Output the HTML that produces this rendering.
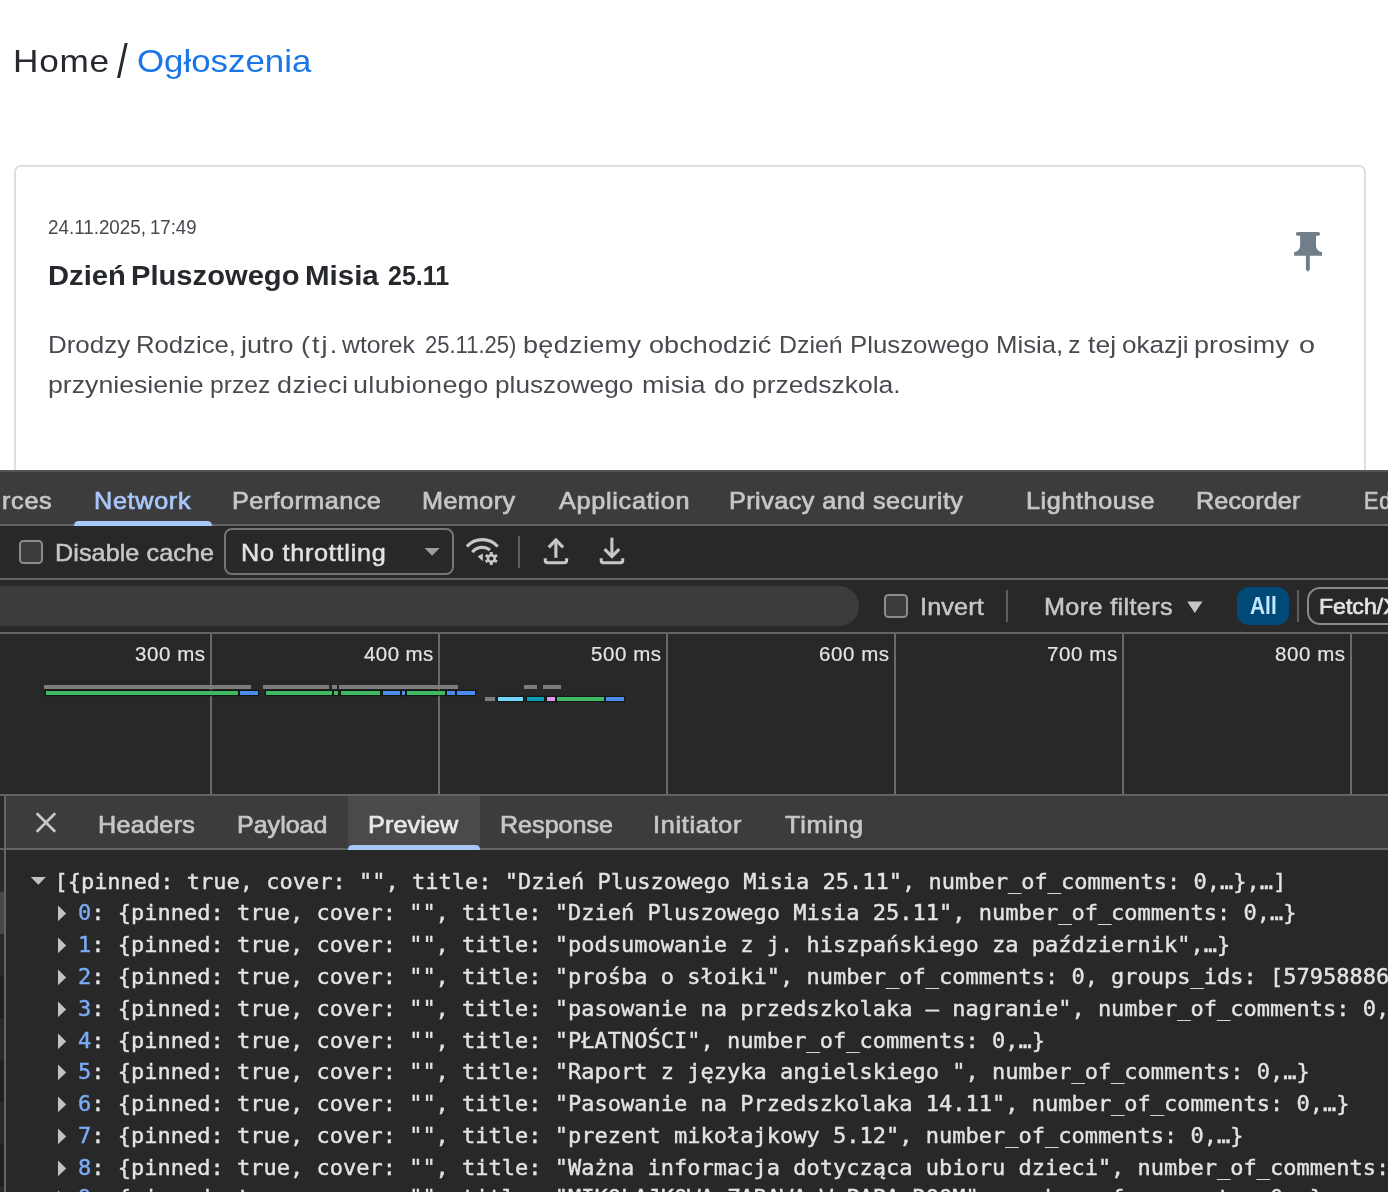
<!DOCTYPE html>
<html lang="pl">
<head>
<meta charset="utf-8">
<title>Ogłoszenia</title>
<style>
html,body{margin:0;padding:0;}
body{width:1388px;height:1192px;overflow:hidden;position:relative;background:#fff;font-family:"Liberation Sans",sans-serif;}
.t{position:absolute;white-space:nowrap;display:block;transform-origin:0 50%;}
.abs{position:absolute;}
#page{will-change:transform;position:absolute;left:0;top:0;width:1388px;height:470px;overflow:hidden;background:#fff;}
#card{position:absolute;left:14px;top:165px;width:1348px;height:400px;border:2px solid #dcdfe1;border-radius:7px;background:#fff;}
.mono{position:absolute;white-space:pre;-webkit-text-stroke:0.4px #e3e3e3;font-family:"DejaVu Sans Mono","Liberation Mono",monospace;font-size:22px;line-height:32px;color:#e3e3e3;letter-spacing:0;}
.mono b{font-weight:400;color:#7cacf8;-webkit-text-stroke:0.4px #7cacf8;}
</style>
</head>
<body>
<div id="page">
  <div id="card"></div>
<span class="t" style="left:12.64px;top:40.31px;font-size:32px;line-height:42px;color:#26292d;letter-spacing:0.658px;transform:scaleX(1.1000);">Home</span>
<span class="t" style="left:117.30px;top:30.51px;font-size:47.6px;line-height:62px;color:#26292d;transform:scaleX(0.8071);">/</span>
<span class="t" style="left:136.67px;top:40.31px;font-size:32px;line-height:42px;color:#1a76e8;transform:scaleX(1.0885);">Ogłoszenia</span>
<span class="t" style="left:47.70px;top:214.07px;font-size:20px;line-height:26px;color:#464a4f;transform:scaleX(0.9402);">24.11.2025,</span>
<span class="t" style="left:150.23px;top:214.07px;font-size:20px;line-height:26px;color:#464a4f;transform:scaleX(0.9288);">17:49</span>
<span class="t" style="left:48.04px;top:258.44px;font-size:27.6px;line-height:36px;color:#25282d;transform:scaleX(1.0564);font-weight:700;">Dzień</span>
<span class="t" style="left:131.32px;top:258.44px;font-size:27.6px;line-height:36px;color:#25282d;transform:scaleX(1.0567);font-weight:700;">Pluszowego</span>
<span class="t" style="left:305.49px;top:258.44px;font-size:27.6px;line-height:36px;color:#25282d;transform:scaleX(1.0685);font-weight:700;">Misia</span>
<span class="t" style="left:387.74px;top:258.44px;font-size:27.6px;line-height:36px;color:#25282d;transform:scaleX(0.9068);font-weight:700;">25.11</span>
<span class="t" style="left:47.52px;top:329.01px;font-size:24.5px;line-height:32px;color:#474b50;transform:scaleX(1.0582);">Drodzy</span>
<span class="t" style="left:136.44px;top:329.01px;font-size:24.5px;line-height:32px;color:#474b50;transform:scaleX(1.0485);">Rodzice,</span>
<span class="t" style="left:241.45px;top:329.01px;font-size:24.5px;line-height:32px;color:#474b50;letter-spacing:0.038px;transform:scaleX(1.1000);">jutro</span>
<span class="t" style="left:301.00px;top:329.01px;font-size:24.5px;line-height:32px;color:#474b50;letter-spacing:1.883px;transform:scaleX(1.1000);">(tj.</span>
<span class="t" style="left:342.49px;top:329.01px;font-size:24.5px;line-height:32px;color:#474b50;transform:scaleX(1.0118);">wtorek</span>
<span class="t" style="left:424.74px;top:329.01px;font-size:24.5px;line-height:32px;color:#474b50;letter-spacing:-0.020px;transform:scaleX(0.9000);">25.11.25)</span>
<span class="t" style="left:523.28px;top:329.01px;font-size:24.5px;line-height:32px;color:#474b50;letter-spacing:0.329px;transform:scaleX(1.1000);">będziemy</span>
<span class="t" style="left:649.16px;top:329.01px;font-size:24.5px;line-height:32px;color:#474b50;letter-spacing:0.107px;transform:scaleX(1.1000);">obchodzić</span>
<span class="t" style="left:779.33px;top:329.01px;font-size:24.5px;line-height:32px;color:#474b50;transform:scaleX(1.0164);">Dzień</span>
<span class="t" style="left:849.53px;top:329.01px;font-size:24.5px;line-height:32px;color:#474b50;transform:scaleX(1.0532);">Pluszowego</span>
<span class="t" style="left:995.90px;top:329.01px;font-size:24.5px;line-height:32px;color:#474b50;transform:scaleX(1.0493);">Misia,</span>
<span class="t" style="left:1068.28px;top:329.01px;font-size:24.5px;line-height:32px;color:#474b50;">z</span>
<span class="t" style="left:1087.51px;top:329.01px;font-size:24.5px;line-height:32px;color:#474b50;transform:scaleX(1.0840);">tej</span>
<span class="t" style="left:1122.11px;top:329.01px;font-size:24.5px;line-height:32px;color:#474b50;transform:scaleX(1.0640);">okazji</span>
<span class="t" style="left:1194.46px;top:329.01px;font-size:24.5px;line-height:32px;color:#474b50;letter-spacing:0.078px;transform:scaleX(1.1000);">prosimy</span>
<span class="t" style="left:1298.87px;top:329.01px;font-size:24.5px;line-height:32px;color:#474b50;transform:scaleX(1.1764);">o</span>
<span class="t" style="left:47.75px;top:368.91px;font-size:24.5px;line-height:32px;color:#474b50;transform:scaleX(1.0885);">przyniesienie</span>
<span class="t" style="left:209.88px;top:368.91px;font-size:24.5px;line-height:32px;color:#474b50;transform:scaleX(1.0060);">przez</span>
<span class="t" style="left:276.88px;top:368.91px;font-size:24.5px;line-height:32px;color:#474b50;letter-spacing:0.361px;transform:scaleX(1.1000);">dzieci</span>
<span class="t" style="left:353.46px;top:368.91px;font-size:24.5px;line-height:32px;color:#474b50;letter-spacing:0.327px;transform:scaleX(1.1000);">ulubionego</span>
<span class="t" style="left:495.39px;top:368.91px;font-size:24.5px;line-height:32px;color:#474b50;transform:scaleX(1.0688);">pluszowego</span>
<span class="t" style="left:641.74px;top:368.91px;font-size:24.5px;line-height:32px;color:#474b50;letter-spacing:0.114px;transform:scaleX(1.1000);">misia</span>
<span class="t" style="left:714.16px;top:368.91px;font-size:24.5px;line-height:32px;color:#474b50;letter-spacing:0.657px;transform:scaleX(1.1000);">do</span>
<span class="t" style="left:752.02px;top:368.91px;font-size:24.5px;line-height:32px;color:#474b50;transform:scaleX(1.0811);">przedszkola.</span>
  <svg class="abs" style="left:1290px;top:228px" width="36" height="48" viewBox="0 0 36 48">
    <g fill="#727d8a">
      <rect x="5.9" y="3.9" width="24.1" height="3.9" rx="1.9"/>
      <path d="M10.1 6 H26 V18.5 C26.4 21.5 28.6 23.6 32 24.2 V27.8 H4.1 V24.2 C7.5 23.6 9.7 21.5 10.1 18.5 Z"/>
      <path d="M15.9 27 H19.8 V41.5 L17.85 43.8 L15.9 41.5 Z"/>
    </g>
  </svg>
</div>
<div id="devwrap" class="abs" style="left:0;top:0;width:1388px;height:1192px;will-change:transform">
<div class="abs" style="left:0px;top:470px;width:1388px;height:722px;background:#282828;"></div>
<div class="abs" style="left:0px;top:470px;width:1388px;height:55px;background:#3c3c3c;"></div>
<div class="abs" style="left:0px;top:470px;width:1388px;height:2px;background:#525252;"></div>
<div class="abs" style="left:0px;top:524px;width:1388px;height:2px;background:#646464;"></div>
<div class="abs" style="left:73.8px;top:521.3px;width:138.5px;height:4.7px;background:#a8c7fa;border-radius:4.5px 4.5px 0 0;"></div>
<div class="abs" style="left:0px;top:578px;width:1388px;height:2px;background:#646464;"></div>
<div class="abs" style="left:19px;top:540.3px;width:19.9px;height:19.4px;border:2px solid #8c8c8c;border-radius:4.5px;background:#3b3b3b"></div>
<div class="abs" style="left:223.6px;top:528.3px;width:226.6px;height:43.2px;border:2px solid #747474;border-radius:8px;background:#282828"></div>
<svg class="abs" style="left:424px;top:547px" width="17" height="10" viewBox="0 0 17 10"><path d="M0.5 0.9 H15.7 L8.1 8.8 Z" fill="#9e9e9e"/></svg>
<svg class="abs" style="left:462px;top:532px" width="42" height="38" viewBox="0 0 42 38">
<g fill="none" stroke="#c7c7c7" stroke-width="3.2" stroke-linecap="butt">
<path d="M4.9 14.5 A20.6 20.6 0 0 1 35.7 14.5"/>
<path d="M10.4 20.3 A12.4 12.4 0 0 1 28 18"/>
</g>
<path d="M15.6 24.4 L20.8 21.6 L20.8 29.2 Z" fill="#c7c7c7"/>
<g transform="translate(29.3 26.5)" fill="#c7c7c7">
<circle r="4.6"/>
<g><rect x="-1.5" y="-6.6" width="3" height="13.2" rx="0.6"/><rect x="-1.5" y="-6.6" width="3" height="13.2" rx="0.6" transform="rotate(60)"/><rect x="-1.5" y="-6.6" width="3" height="13.2" rx="0.6" transform="rotate(120)"/></g>
<circle r="2.1" fill="#282828"/>
</g>
</svg>
<div class="abs" style="left:518px;top:536px;width:1.8px;height:32px;background:#5e5e5e;"></div>
<svg class="abs" style="left:540px;top:534px" width="32" height="34" viewBox="0 0 32 34">
<g fill="none" stroke="#c7c7c7" stroke-width="3.1" stroke-linejoin="round">
<path d="M15.9 23.8 V5.6"/><path d="M8.7 13.3 L15.9 5.9 L23.1 13.3" stroke-linejoin="miter"/>
<path d="M5.3 24.2 V26.6 Q5.3 28.7 7.4 28.7 H24.5 Q26.6 28.7 26.6 26.6 V24.2"/>
</g></svg>
<svg class="abs" style="left:596px;top:534px" width="32" height="34" viewBox="0 0 32 34">
<g fill="none" stroke="#c7c7c7" stroke-width="3.1" stroke-linejoin="round">
<path d="M15.9 3.7 V21.5"/><path d="M8.6 15.2 L15.9 22.6 L23.2 15.2" stroke-linejoin="miter"/>
<path d="M5.2 24.2 V26.6 Q5.2 28.7 7.3 28.7 H24.6 Q26.7 28.7 26.7 26.6 V24.2"/>
</g></svg>
<div class="abs" style="left:-40px;top:586.4px;width:899.3px;height:39.4px;background:#3c3c3c;border-radius:20px;"></div>
<div class="abs" style="left:884px;top:593.8px;width:19.8px;height:19.9px;border:2px solid #8c8c8c;border-radius:4.5px;background:#3b3b3b"></div>
<div class="abs" style="left:1006px;top:590px;width:1.8px;height:32px;background:#5e5e5e;"></div>
<svg class="abs" style="left:1186px;top:600px" width="18" height="14" viewBox="0 0 18 14"><path d="M1.2 1.4 H16.5 L8.85 13 Z" fill="#c7c7c7"/></svg>
<div class="abs" style="left:1237px;top:586.7px;width:52.2px;height:38.0px;background:#004a77;border-radius:12px;"></div>
<div class="abs" style="left:1297.3px;top:590.2px;width:1.6px;height:31.8px;background:#5e5e5e;"></div>
<div class="abs" style="left:1306.8px;top:587px;width:120px;height:34px;border:2px solid #8a8a8a;border-radius:13px;"></div>
<div class="abs" style="left:0px;top:632px;width:1388px;height:2px;background:#646464;"></div>
<div class="abs" style="left:210px;top:634px;width:2px;height:160px;background:#6a6a6a;"></div>
<div class="abs" style="left:438px;top:634px;width:2px;height:160px;background:#6a6a6a;"></div>
<div class="abs" style="left:666px;top:634px;width:2px;height:160px;background:#6a6a6a;"></div>
<div class="abs" style="left:894px;top:634px;width:2px;height:160px;background:#6a6a6a;"></div>
<div class="abs" style="left:1122px;top:634px;width:2px;height:160px;background:#6a6a6a;"></div>
<div class="abs" style="left:1350px;top:634px;width:2px;height:160px;background:#6a6a6a;"></div>
<div class="abs" style="left:44.1px;top:685px;width:206.8px;height:4px;background:#7c7c7c;"></div>
<div class="abs" style="left:45.6px;top:690.5px;width:192.7px;height:4.5px;background:#41b964;box-shadow:0 0 0 1.2px rgba(8,22,12,0.75);"></div>
<div class="abs" style="left:239.5px;top:690.5px;width:18.7px;height:4.5px;background:#4d8af0;box-shadow:0 0 0 1.2px rgba(8,22,12,0.75);"></div>
<div class="abs" style="left:263px;top:685px;width:65.7px;height:4px;background:#7c7c7c;"></div>
<div class="abs" style="left:331.6px;top:685px;width:5.4px;height:4px;background:#7c7c7c;"></div>
<div class="abs" style="left:339.3px;top:685px;width:119.1px;height:4px;background:#7c7c7c;"></div>
<div class="abs" style="left:265.9px;top:690.5px;width:65.7px;height:4.5px;background:#41b964;box-shadow:0 0 0 1.2px rgba(8,22,12,0.75);"></div>
<div class="abs" style="left:334.1px;top:690.5px;width:4.4px;height:4.5px;background:#41b964;box-shadow:0 0 0 1.2px rgba(8,22,12,0.75);"></div>
<div class="abs" style="left:341px;top:690.5px;width:39.3px;height:4.5px;background:#41b964;box-shadow:0 0 0 1.2px rgba(8,22,12,0.75);"></div>
<div class="abs" style="left:382.6px;top:690.5px;width:17.5px;height:4.5px;background:#4d8af0;box-shadow:0 0 0 1.2px rgba(8,22,12,0.75);"></div>
<div class="abs" style="left:402.2px;top:690.5px;width:2.6px;height:4.5px;background:#4d8af0;box-shadow:0 0 0 1.2px rgba(8,22,12,0.75);"></div>
<div class="abs" style="left:407px;top:690.5px;width:37.8px;height:4.5px;background:#41b964;box-shadow:0 0 0 1.2px rgba(8,22,12,0.75);"></div>
<div class="abs" style="left:447.1px;top:690.5px;width:7.5px;height:4.5px;background:#4d8af0;box-shadow:0 0 0 1.2px rgba(8,22,12,0.75);"></div>
<div class="abs" style="left:456.9px;top:690.5px;width:17.9px;height:4.5px;background:#4d8af0;box-shadow:0 0 0 1.2px rgba(8,22,12,0.75);"></div>
<div class="abs" style="left:523.8px;top:685px;width:12.9px;height:4px;background:#7c7c7c;"></div>
<div class="abs" style="left:542.5px;top:685px;width:18.2px;height:4px;background:#7c7c7c;"></div>
<div class="abs" style="left:484.9px;top:696.8px;width:10.3px;height:4.4px;background:#7c7c7c;"></div>
<div class="abs" style="left:497.8px;top:696.8px;width:25.1px;height:4.4px;background:#70d4fb;box-shadow:0 0 0 1.2px rgba(8,22,12,0.75);"></div>
<div class="abs" style="left:527.2px;top:696.8px;width:17.3px;height:4.4px;background:#0f9ab6;box-shadow:0 0 0 1.2px rgba(8,22,12,0.75);"></div>
<div class="abs" style="left:547.1px;top:696.8px;width:7.5px;height:4.4px;background:#e297f4;box-shadow:0 0 0 1.2px rgba(8,22,12,0.75);"></div>
<div class="abs" style="left:556.9px;top:696.8px;width:46.7px;height:4.4px;background:#41b964;box-shadow:0 0 0 1.2px rgba(8,22,12,0.75);"></div>
<div class="abs" style="left:605.9px;top:696.8px;width:17.9px;height:4.4px;background:#4d8af0;box-shadow:0 0 0 1.2px rgba(8,22,12,0.75);"></div>
<div class="abs" style="left:0px;top:794px;width:1388px;height:2px;background:#646464;"></div>
<div class="abs" style="left:0px;top:796px;width:4px;height:54px;background:#282828;"></div>
<div class="abs" style="left:6px;top:796px;width:1382px;height:52.5px;background:#3c3c3c;"></div>
<div class="abs" style="left:348px;top:796px;width:132px;height:52.5px;background:#4a4a4a;"></div>
<div class="abs" style="left:0px;top:848px;width:1388px;height:2px;background:#646464;"></div>
<div class="abs" style="left:348px;top:845.3px;width:132px;height:4.7px;background:#a8c7fa;border-radius:4.5px 4.5px 0 0;"></div>
<div class="abs" style="left:0px;top:850px;width:4px;height:42px;background:#2a2a2a;"></div>
<div class="abs" style="left:0px;top:892px;width:4px;height:42px;background:#474747;"></div>
<div class="abs" style="left:0px;top:934px;width:4px;height:42px;background:#2a2a2a;"></div>
<div class="abs" style="left:0px;top:976px;width:4px;height:42px;background:#1f1f1f;"></div>
<div class="abs" style="left:0px;top:1018px;width:4px;height:42px;background:#2a2a2a;"></div>
<div class="abs" style="left:0px;top:1060px;width:4px;height:42px;background:#1f1f1f;"></div>
<div class="abs" style="left:0px;top:1102px;width:4px;height:42px;background:#2a2a2a;"></div>
<div class="abs" style="left:0px;top:1144px;width:4px;height:42px;background:#1f1f1f;"></div>
<div class="abs" style="left:0px;top:1186px;width:4px;height:42px;background:#2a2a2a;"></div>
<div class="abs" style="left:4px;top:796px;width:2px;height:396px;background:#646464;"></div>
<svg class="abs" style="left:33px;top:809px" width="26" height="26" viewBox="0 0 26 26"><path d="M3.7 4.2 L22.2 22.7 M22.2 4.2 L3.7 22.7" stroke="#c7c7c7" stroke-width="2.7" fill="none"/></svg>
<div class="mono" style="left:54.4px;top:865.79px">[{pinned: true, cover: "", title: "Dzień Pluszowego Misia 25.11", number_of_comments: 0,…},…]</div>
<svg class="abs" style="left:30px;top:876px" width="17" height="10" viewBox="0 0 17 10"><path d="M0.8 1 H15.9 L8.35 8.7 Z" fill="#c2c2c2"/></svg>
<div class="mono" style="left:78px;top:896.79px"><b>0</b>: {pinned: true, cover: "", title: "Dzień Pluszowego Misia 25.11", number_of_comments: 0,…}</div>
<svg class="abs" style="left:57px;top:904.80px" width="10" height="17" viewBox="0 0 10 17"><path d="M1 0.5 V16.3 L9.2 8.4 Z" fill="#c2c2c2"/></svg>
<div class="mono" style="left:78px;top:928.72px"><b>1</b>: {pinned: true, cover: "", title: "podsumowanie z j. hiszpańskiego za październik",…}</div>
<svg class="abs" style="left:57px;top:936.73px" width="10" height="17" viewBox="0 0 10 17"><path d="M1 0.5 V16.3 L9.2 8.4 Z" fill="#c2c2c2"/></svg>
<div class="mono" style="left:78px;top:960.65px"><b>2</b>: {pinned: true, cover: "", title: "prośba o słoiki", number_of_comments: 0, groups_ids: [57958886, 57958887],…}</div>
<svg class="abs" style="left:57px;top:968.66px" width="10" height="17" viewBox="0 0 10 17"><path d="M1 0.5 V16.3 L9.2 8.4 Z" fill="#c2c2c2"/></svg>
<div class="mono" style="left:78px;top:992.58px"><b>3</b>: {pinned: true, cover: "", title: "pasowanie na przedszkolaka – nagranie", number_of_comments: 0,…}</div>
<svg class="abs" style="left:57px;top:1000.59px" width="10" height="17" viewBox="0 0 10 17"><path d="M1 0.5 V16.3 L9.2 8.4 Z" fill="#c2c2c2"/></svg>
<div class="mono" style="left:78px;top:1024.51px"><b>4</b>: {pinned: true, cover: "", title: "PŁATNOŚCI", number_of_comments: 0,…}</div>
<svg class="abs" style="left:57px;top:1032.52px" width="10" height="17" viewBox="0 0 10 17"><path d="M1 0.5 V16.3 L9.2 8.4 Z" fill="#c2c2c2"/></svg>
<div class="mono" style="left:78px;top:1056.44px"><b>5</b>: {pinned: true, cover: "", title: "Raport z języka angielskiego ", number_of_comments: 0,…}</div>
<svg class="abs" style="left:57px;top:1064.45px" width="10" height="17" viewBox="0 0 10 17"><path d="M1 0.5 V16.3 L9.2 8.4 Z" fill="#c2c2c2"/></svg>
<div class="mono" style="left:78px;top:1088.37px"><b>6</b>: {pinned: true, cover: "", title: "Pasowanie na Przedszkolaka 14.11", number_of_comments: 0,…}</div>
<svg class="abs" style="left:57px;top:1096.38px" width="10" height="17" viewBox="0 0 10 17"><path d="M1 0.5 V16.3 L9.2 8.4 Z" fill="#c2c2c2"/></svg>
<div class="mono" style="left:78px;top:1120.30px"><b>7</b>: {pinned: true, cover: "", title: "prezent mikołajkowy 5.12", number_of_comments: 0,…}</div>
<svg class="abs" style="left:57px;top:1128.31px" width="10" height="17" viewBox="0 0 10 17"><path d="M1 0.5 V16.3 L9.2 8.4 Z" fill="#c2c2c2"/></svg>
<div class="mono" style="left:78px;top:1152.23px"><b>8</b>: {pinned: true, cover: "", title: "Ważna informacja dotycząca ubioru dzieci", number_of_comments: 0,…}</div>
<svg class="abs" style="left:57px;top:1160.24px" width="10" height="17" viewBox="0 0 10 17"><path d="M1 0.5 V16.3 L9.2 8.4 Z" fill="#c2c2c2"/></svg>
<div class="mono" style="left:78px;top:1181.79px"><b>9</b>: {pinned: true, cover: "", title: "MIKOŁAJKOWA ZABAWA W PAPA ROOM", number_of_comments: 0,…}</div>
<svg class="abs" style="left:57px;top:1189.80px" width="10" height="17" viewBox="0 0 10 17"><path d="M1 0.5 V16.3 L9.2 8.4 Z" fill="#c2c2c2"/></svg>
<span class="t" style="left:2.44px;top:485.18px;font-size:24px;line-height:31px;color:#c7c7c7;letter-spacing:0.669px;transform:scaleX(1.0500);-webkit-text-stroke:0.7px #c7c7c7;">rces</span>
<span class="t" style="left:94.06px;top:485.18px;font-size:24px;line-height:31px;color:#a8c7fa;letter-spacing:0.654px;transform:scaleX(1.0500);-webkit-text-stroke:0.7px #a8c7fa;">Network</span>
<span class="t" style="left:231.88px;top:485.18px;font-size:24px;line-height:31px;color:#c7c7c7;letter-spacing:0.422px;transform:scaleX(1.0500);-webkit-text-stroke:0.7px #c7c7c7;">Performance</span>
<span class="t" style="left:422.24px;top:485.18px;font-size:24px;line-height:31px;color:#c7c7c7;letter-spacing:0.413px;transform:scaleX(1.0500);-webkit-text-stroke:0.7px #c7c7c7;">Memory</span>
<span class="t" style="left:558.64px;top:485.18px;font-size:24px;line-height:31px;color:#c7c7c7;letter-spacing:0.679px;transform:scaleX(1.0500);-webkit-text-stroke:0.7px #c7c7c7;">Application</span>
<span class="t" style="left:729.16px;top:485.18px;font-size:24px;line-height:31px;color:#c7c7c7;letter-spacing:0.424px;transform:scaleX(1.0500);-webkit-text-stroke:0.7px #c7c7c7;">Privacy and security</span>
<span class="t" style="left:1026.06px;top:485.18px;font-size:24px;line-height:31px;color:#c7c7c7;letter-spacing:0.563px;transform:scaleX(1.0500);-webkit-text-stroke:0.7px #c7c7c7;">Lighthouse</span>
<span class="t" style="left:1196.24px;top:485.18px;font-size:24px;line-height:31px;color:#c7c7c7;letter-spacing:0.088px;transform:scaleX(1.0500);-webkit-text-stroke:0.7px #c7c7c7;">Recorder</span>
<span class="t" style="left:1363.50px;top:485.18px;font-size:24px;line-height:31px;color:#c7c7c7;letter-spacing:0.800px;transform:scaleX(0.9000);-webkit-text-stroke:0.7px #c7c7c7;">Ed</span>
<span class="t" style="left:54.69px;top:537.18px;font-size:24px;line-height:31px;color:#c7c7c7;letter-spacing:0.055px;transform:scaleX(1.0500);-webkit-text-stroke:0.5px #c7c7c7;">Disable cache</span>
<span class="t" style="left:240.51px;top:537.18px;font-size:24px;line-height:31px;color:#e3e3e3;letter-spacing:0.705px;transform:scaleX(1.0500);-webkit-text-stroke:0.5px #e3e3e3;">No throttling</span>
<span class="t" style="left:919.60px;top:591.18px;font-size:24px;line-height:31px;color:#c7c7c7;letter-spacing:0.120px;transform:scaleX(1.0500);-webkit-text-stroke:0.5px #c7c7c7;">Invert</span>
<span class="t" style="left:1043.61px;top:591.18px;font-size:24px;line-height:31px;color:#c7c7c7;letter-spacing:0.336px;transform:scaleX(1.0500);-webkit-text-stroke:0.5px #c7c7c7;">More filters</span>
<span class="t" style="left:1249.96px;top:591.03px;font-size:23px;line-height:30px;color:#c2e7ff;transform:scaleX(0.9086);font-weight:700;">All</span>
<span class="t" style="left:1318.95px;top:591.88px;font-size:22px;line-height:29px;color:#e3e3e3;transform:scaleX(1.0495);-webkit-text-stroke:0.7px #e3e3e3;">Fetch/X</span>
<span class="t" style="left:135.02px;top:641.74px;font-size:19.5px;line-height:25px;color:#e3e3e3;letter-spacing:0.549px;transform:scaleX(1.0500);-webkit-text-stroke:0.2px #e3e3e3;">300 ms</span>
<span class="t" style="left:363.73px;top:641.74px;font-size:19.5px;line-height:25px;color:#e3e3e3;letter-spacing:0.413px;transform:scaleX(1.0500);-webkit-text-stroke:0.2px #e3e3e3;">400 ms</span>
<span class="t" style="left:591.02px;top:641.74px;font-size:19.5px;line-height:25px;color:#e3e3e3;letter-spacing:0.549px;transform:scaleX(1.0500);-webkit-text-stroke:0.2px #e3e3e3;">500 ms</span>
<span class="t" style="left:819.02px;top:641.74px;font-size:19.5px;line-height:25px;color:#e3e3e3;letter-spacing:0.549px;transform:scaleX(1.0500);-webkit-text-stroke:0.2px #e3e3e3;">600 ms</span>
<span class="t" style="left:1046.77px;top:641.74px;font-size:19.5px;line-height:25px;color:#e3e3e3;letter-spacing:0.596px;transform:scaleX(1.0500);-webkit-text-stroke:0.2px #e3e3e3;">700 ms</span>
<span class="t" style="left:1275.02px;top:641.74px;font-size:19.5px;line-height:25px;color:#e3e3e3;letter-spacing:0.549px;transform:scaleX(1.0500);-webkit-text-stroke:0.2px #e3e3e3;">800 ms</span>
<span class="t" style="left:97.98px;top:809.18px;font-size:24px;line-height:31px;color:#c7c7c7;letter-spacing:0.265px;transform:scaleX(1.0500);-webkit-text-stroke:0.7px #c7c7c7;">Headers</span>
<span class="t" style="left:236.71px;top:809.18px;font-size:24px;line-height:31px;color:#c7c7c7;transform:scaleX(1.0428);-webkit-text-stroke:0.7px #c7c7c7;">Payload</span>
<span class="t" style="left:368.43px;top:809.18px;font-size:24px;line-height:31px;color:#e8e8e8;letter-spacing:0.108px;transform:scaleX(1.0500);-webkit-text-stroke:0.7px #e8e8e8;">Preview</span>
<span class="t" style="left:500.25px;top:809.18px;font-size:24px;line-height:31px;color:#c7c7c7;transform:scaleX(1.0457);-webkit-text-stroke:0.7px #c7c7c7;">Response</span>
<span class="t" style="left:653.44px;top:809.18px;font-size:24px;line-height:31px;color:#c7c7c7;letter-spacing:0.692px;transform:scaleX(1.0500);-webkit-text-stroke:0.7px #c7c7c7;">Initiator</span>
<span class="t" style="left:784.99px;top:809.18px;font-size:24px;line-height:31px;color:#c7c7c7;letter-spacing:0.645px;transform:scaleX(1.0500);-webkit-text-stroke:0.7px #c7c7c7;">Timing</span>
</div>
</body>
</html>
